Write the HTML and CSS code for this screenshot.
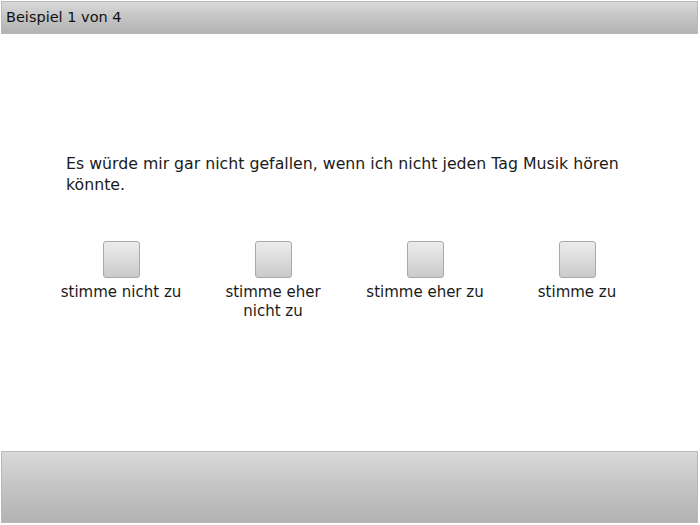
FILE: index.html
```html
<!DOCTYPE html>
<html lang="de">
<head>
    <meta charset="UTF-8">
    <meta name="viewport" content="width=device-width, initial-scale=1.0">
    <title>Beispiel 1 von 4</title>
    <link rel="stylesheet" href="styles.css">
</head>
<body>
    <div class="page">
        <div class="top-bar">Beispiel 1 von 4</div>

        <div class="content">
            <p class="question">Es würde mir gar nicht gefallen, wenn ich nicht jeden Tag Musik hören könnte.</p>

            <div class="scale">
                <label class="option">
                    <span class="box"></span>
                    <span class="caption">stimme nicht zu</span>
                </label>
                <label class="option">
                    <span class="box"></span>
                    <span class="caption">stimme eher<br>nicht zu</span>
                </label>
                <label class="option">
                    <span class="box"></span>
                    <span class="caption">stimme eher zu</span>
                </label>
                <label class="option">
                    <span class="box"></span>
                    <span class="caption">stimme zu</span>
                </label>
            </div>
        </div>

        <div class="bottom-bar"></div>
    </div>
</body>
</html>
```

FILE: styles.css
```css
:root {
    --bar-gradient: linear-gradient(180deg, #d9d9d9 0%, #c4c4c4 50%, #b3b3b3 100%);
    --bar-border: #b8b8b8;
}

html, body {
    margin: 0;
    padding: 0;
    background: #fff;
}

body {
    font-family: 'DejaVu Sans', sans-serif;
    color: #1a1a1a;
}

.page {
    display: flex;
    flex-direction: column;
    height: 525px;
}

.top-bar {
    margin: 1px 2px 0 1px;
    height: 31px;
    border: 1px solid var(--bar-border);
    background: var(--bar-gradient);
    font-size: 14.5px;
    line-height: 31px;
    padding-left: 4px;
    color: #111;
}

.content {
    flex: 1;
    padding: 119px 45px 0 66px;
}

.question {
    margin: 0;
    width: 570px;
    font-size: 15.75px;
    line-height: 21px;
}

.scale {
    display: grid;
    grid-template-columns: repeat(4, 152px);
    margin: 46px 0 0 -21px;
}

.option {
    display: flex;
    flex-direction: column;
    align-items: center;
    text-align: center;
}

.box {
    width: 35px;
    height: 35px;
    border: 1px solid #a9a9a9;
    border-radius: 3px;
    background: linear-gradient(180deg, #ececec 0%, #d8d8d8 60%, #cacaca 100%);
}

.caption {
    margin-top: 5px;
    font-size: 15px;
    line-height: 19px;
}

.bottom-bar {
    margin: 0 2px 2px 1px;
    height: 70px;
    border: 1px solid var(--bar-border);
    background: var(--bar-gradient);
}
```
